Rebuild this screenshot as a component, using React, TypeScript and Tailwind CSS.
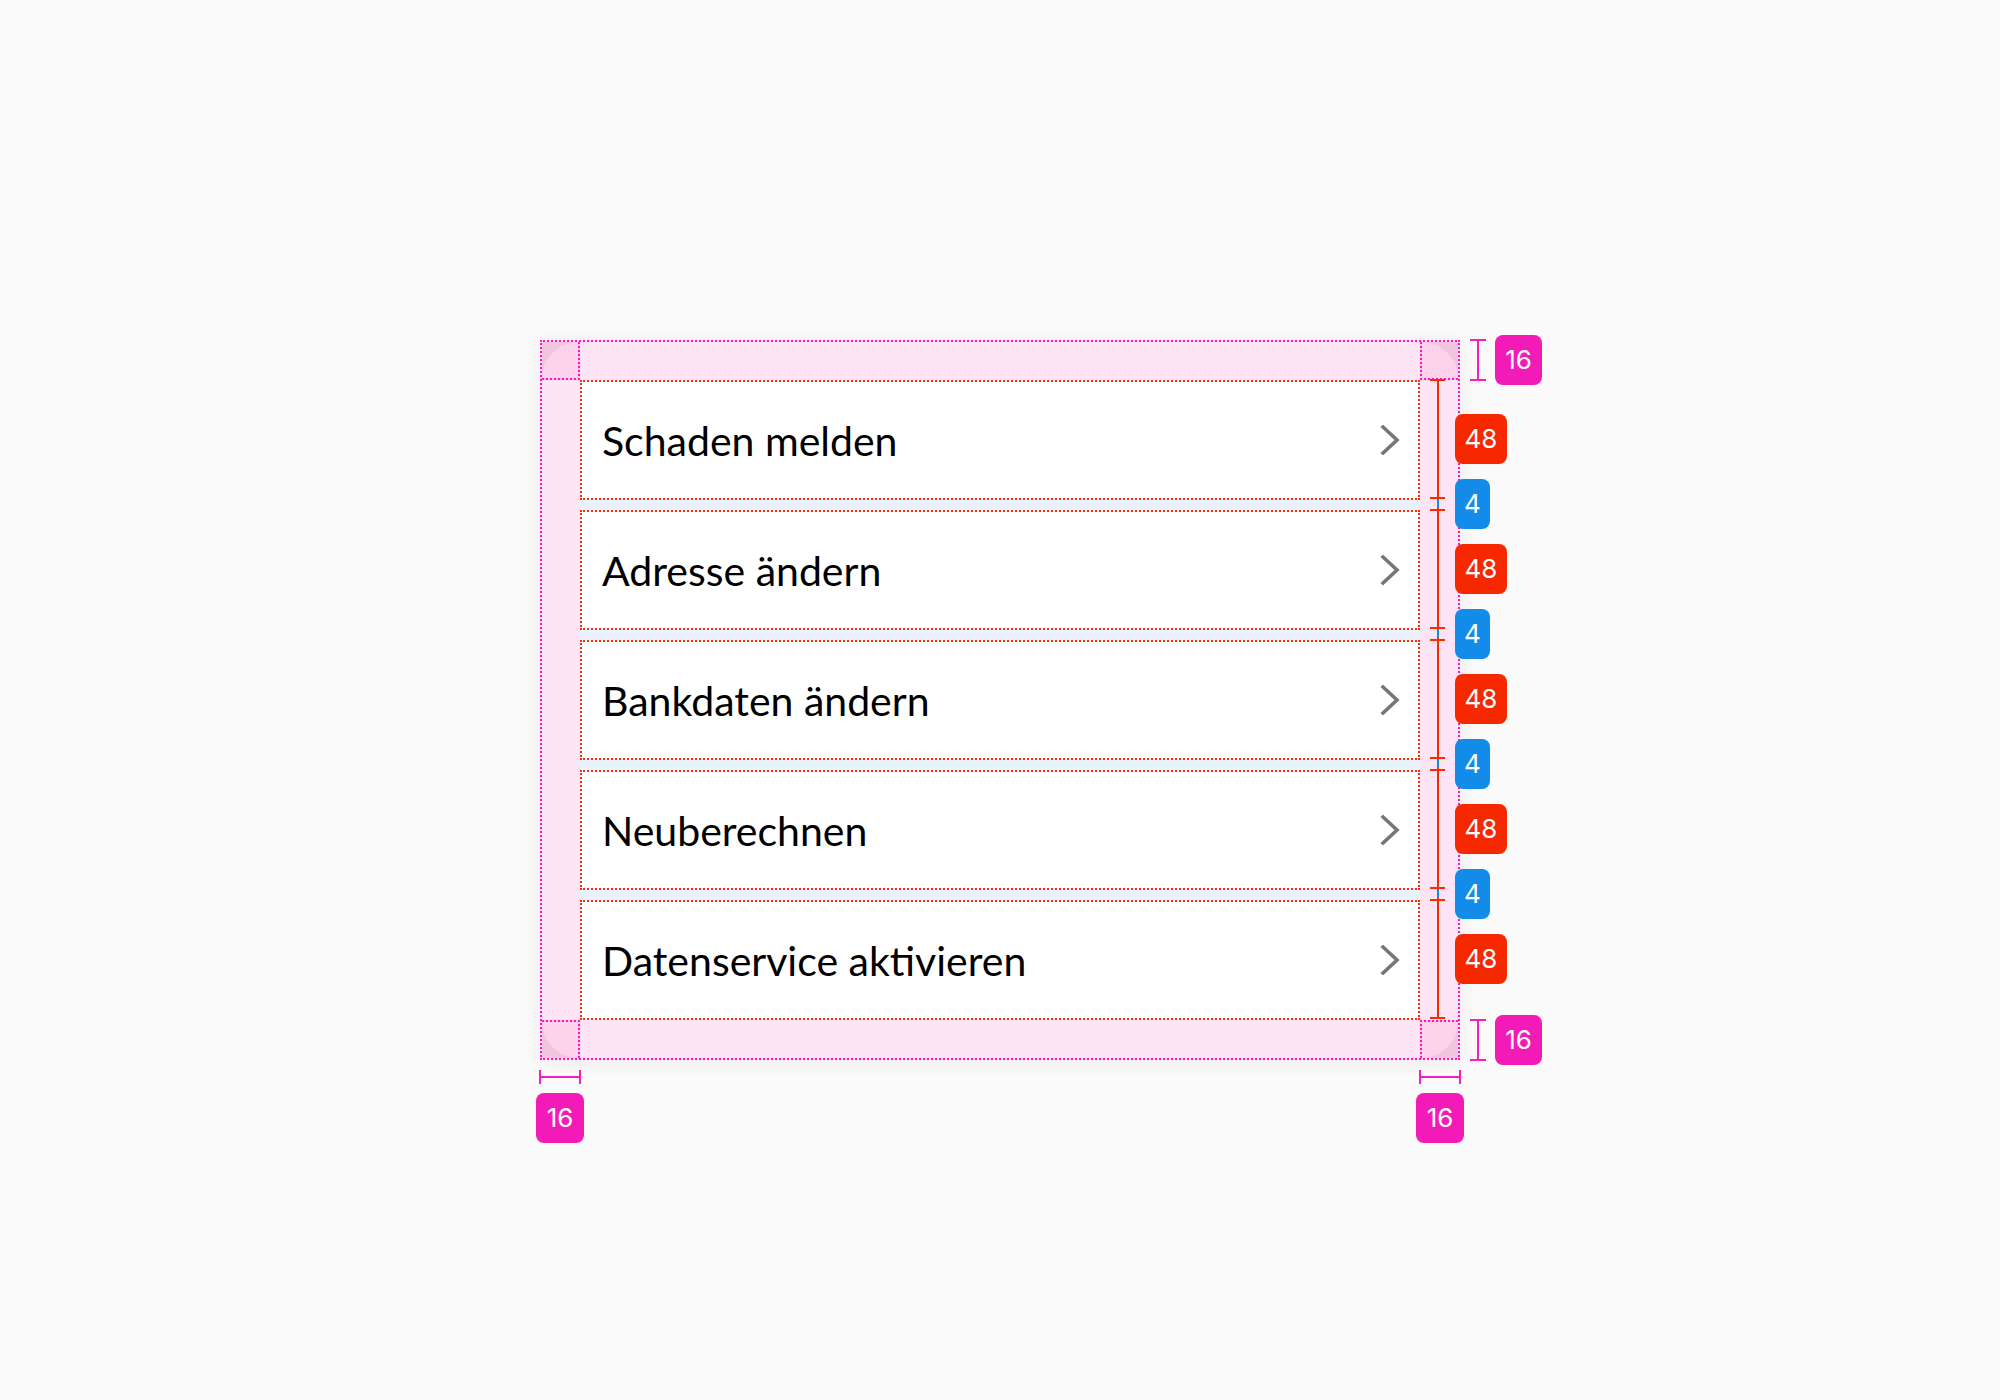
import React from "react";

const items = [
  "Schaden melden",
  "Adresse ändern",
  "Bankdaten ändern",
  "Neuberechnen",
  "Datenservice aktivieren",
];

const badgeFont = { fontFamily: "Inter, 'Liberation Sans', sans-serif" };

function Chevron() {
  return (
    <svg width="20" height="30" viewBox="0 0 20 30" fill="none" className="shrink-0">
      <path d="M3 2 L17 15 L3 28" stroke="#767676" strokeWidth="3.6" strokeLinecap="square" strokeLinejoin="miter" />
    </svg>
  );
}

function Corner({ pos }: { pos: "tl" | "tr" | "bl" | "br" }) {
  const outer =
    pos === "tl"
      ? "border-r-2 border-b-2"
      : pos === "tr"
        ? "border-l-2 border-b-2"
        : pos === "bl"
          ? "border-r-2 border-t-2"
          : "border-l-2 border-t-2";
  const round =
    pos === "tl"
      ? "rounded-tl-[40px]"
      : pos === "tr"
        ? "rounded-tr-[40px]"
        : pos === "bl"
          ? "rounded-bl-[40px]"
          : "rounded-br-[40px]";
  return (
    <div className={`bg-[#f2c5de] border-dotted border-[#ff14c6] ${outer}`}>
      <div className={`h-full w-full bg-[#fdd0ec] ${round}`} />
    </div>
  );
}

function Badge({ label, className }: { label: string; className: string }) {
  return (
    <div
      className={`flex h-[50px] shrink-0 items-center justify-center rounded-[8px] text-[26px] leading-none text-white ${className}`}
      style={badgeFont}
    >
      {label}
    </div>
  );
}

// vertical I-beam used for the 16px paddings
function VBeam() {
  return (
    <div className="flex h-[42px] w-[16px] flex-col items-center">
      <div className="h-[2px] w-[16px] bg-[#f51fbf]" />
      <div className="w-[2px] flex-1 bg-[#f51fbf]" />
      <div className="h-[2px] w-[16px] bg-[#f51fbf]" />
    </div>
  );
}

function HBeam() {
  return (
    <div className="flex h-[14px] w-[42px] items-center">
      <div className="h-[14px] w-[2px] bg-[#f51fbf]" />
      <div className="h-[2px] flex-1 bg-[#f51fbf]" />
      <div className="h-[14px] w-[2px] bg-[#f51fbf]" />
    </div>
  );
}

function RowMeasure() {
  return (
    <div className="flex h-[120px] items-center gap-[10px]">
      <div className="flex h-full w-[15px] flex-col items-center">
        <div className="h-[2px] w-[15px] bg-[#f82a00]" />
        <div className="w-[2px] flex-1 bg-[#f82a00]" />
        <div className="h-[2px] w-[15px] bg-[#f82a00]" />
      </div>
      <Badge label="48" className="w-[52px] bg-[#f62800]" />
    </div>
  );
}

function GapMeasure() {
  return (
    <div className="flex h-[10px] items-center gap-[10px]">
      <div className="flex h-full w-[15px] flex-col items-center">
        <div className="h-[1px] w-[2px] bg-[#f82a00]" />
        <div className="w-[2px] flex-1 bg-[#128ce8]" />
        <div className="h-[1px] w-[2px] bg-[#f82a00]" />
      </div>
      <Badge label="4" className="w-[35px] bg-[#128ce8]" />
    </div>
  );
}

export default function App() {
  return (
    <div className="flex min-h-[1400px] w-full items-center justify-center bg-[#fafafa]">
      <div className="relative w-[920px] shadow-[0_2px_18px_rgba(0,0,0,0.07)]">
        <div className="grid grid-cols-[38px_840px_38px] grid-rows-[38px_auto_38px] border-2 border-dotted border-[#ff14c6] bg-[#fde4f5]">
          <Corner pos="tl" />
          <div />
          <Corner pos="tr" />
          <div />
          <div className="flex flex-col gap-[10px] bg-[#e7f2fc]">
            {items.map((t) => (
              <div
                key={t}
                className="flex h-[120px] items-center justify-between border-2 border-dotted border-[#fa2a05] bg-white pl-[20px] pr-[18px]"
              >
                <span
                  className="text-[41px] leading-none text-black"
                  style={{ fontFamily: "Lato, 'Noto Sans', sans-serif" }}
                >
                  {t}
                </span>
                <Chevron />
              </div>
            ))}
          </div>
          <div />
          <Corner pos="bl" />
          <div />
          <Corner pos="br" />
        </div>

        {/* row / gap measurement column */}
        <div className="absolute left-[890px] top-[39px] flex flex-col">
          {items.map((t, i) => (
            <React.Fragment key={t}>
              {i > 0 && <GapMeasure />}
              <RowMeasure />
            </React.Fragment>
          ))}
        </div>

        {/* top padding */}
        <div className="absolute left-[930px] top-[-5px] flex items-center gap-[9px]">
          <VBeam />
          <Badge label="16" className="w-[47px] bg-[#f31bb7]" />
        </div>

        {/* bottom padding */}
        <div className="absolute left-[930px] top-[675px] flex items-center gap-[9px]">
          <VBeam />
          <Badge label="16" className="w-[47px] bg-[#f31bb7]" />
        </div>

        {/* side paddings */}
        <div className="absolute left-[-1px] right-[-1px] top-[730px] flex justify-between">
          {[0, 1].map((k) => (
            <div key={k} className="flex w-[42px] flex-col items-center gap-[9px]">
              <HBeam />
              <Badge label="16" className="w-[48px] bg-[#f31bb7]" />
            </div>
          ))}
        </div>
      </div>
    </div>
  );
}
